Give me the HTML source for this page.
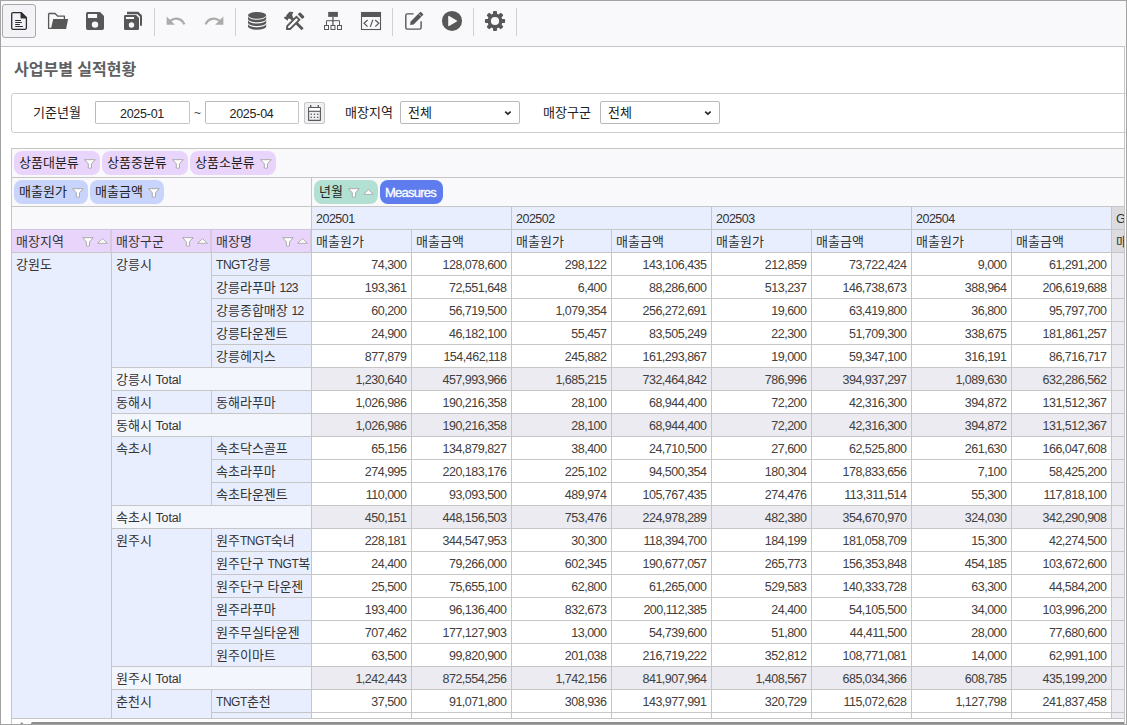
<!DOCTYPE html>
<html lang="ko"><head><meta charset="utf-8"><title>사업부별 실적현황</title>
<style>
*{box-sizing:border-box}
html,body{margin:0;padding:0}
html{overflow:hidden}
body{width:1127px;height:725px;overflow:hidden;background:#fff;position:relative;
 font-family:"Liberation Sans","Noto Sans CJK KR",sans-serif;font-size:13px;color:#222}
#app{position:absolute;left:0;top:0;width:1127px;height:725px;overflow:hidden;background:#fff}
#frame{position:absolute;left:0;top:0;width:1127px;height:725px;border:1px solid #a3a3a3;z-index:50;pointer-events:none}
#tb{position:absolute;left:0;top:0;width:1127px;height:47px;background:#f9f9fb}
.sep{position:absolute;top:8px;width:1px;height:28px;background:#d0d0d4}
#sel{position:absolute;left:2px;top:4px;width:34px;height:34px;border:1px solid #a9a9a9;border-radius:3px;background:#f2f2f7}
#panel{position:absolute;left:1px;top:46px;width:1124px;height:680px;border:1px solid #c6c6c6;border-left:0;background:#fff}
#title{position:absolute;left:14px;top:59px;font-weight:bold;font-size:16px;color:#5f5f5f;line-height:22px;white-space:nowrap}
#filt{position:absolute;left:11px;top:93px;width:1130px;height:40px;border:1px solid #cdcdcd;border-radius:3px}
.lbl{position:absolute;top:102px;line-height:22px;white-space:nowrap;color:#222}
.inp{position:absolute;top:101px;height:23px;border:1px solid #b9b9b9;border-radius:2px;background:#fff;line-height:21px;white-space:nowrap;color:#222}
.inp .n{color:#222;letter-spacing:-0.25px}
.inp.c{text-align:center}
.inp.s{padding-left:7px}
.chev{position:absolute;right:7px;top:7px;width:9px;height:7px}
#cal{position:absolute;left:304px;top:102px;width:21px;height:22px;border:1px solid #c6c6ca;border-radius:2px;background:#f0f0f2}
#grid{position:absolute;left:11px;top:148px;width:1113px;height:571px;overflow:hidden;border-top:1px solid #c6c6c6;border-left:1px solid #c6c6c6;border-bottom:1px solid #c6c6c6;background:#fff}
#grid div{position:absolute;white-space:nowrap;overflow:hidden}
.area{background:#f9f9fb;border-bottom:1px solid #c6c6c6;border-right:1px solid #c6c6c6}
.chip{height:24px;border-radius:8px;line-height:23px;padding-left:5px;color:#222}
.chip svg{position:absolute}
.chip .fn{top:8px}
.chip .st{top:9px}
.pu{background:#e9d4fc}
.bl{background:#c8d4fc}
.gr{background:#b2e1d3}
.me{background:#5e7cee;color:#fff !important}
.c{height:23px;line-height:22px;border-right:1px solid #c6c6c6;border-bottom:1px solid #c6c6c6;padding:1px 5px 0 4px;color:#333}
.l{font-size:12px;letter-spacing:-0.45px}
.l2{font-size:12.5px;letter-spacing:-0.15px}
.hm{font-size:12.5px;letter-spacing:-0.5px}
.ch{background:#e9eefe}
.rf{background:#e9d4fc;border-right-color:#d4c8de;box-shadow:inset -1px 0 0 #d6cadf}
.rf.last{border-right-color:#c6c6c6}
.rf svg{position:absolute}
.rf .fn{top:7px;left:70px}
.rf .st{top:8px;left:85px}
.rh{background:#e9eefe}
.rt{background:#f4f6fe}
.v,.vt,.n{font-size:12.5px;letter-spacing:-0.5px;color:#404040}
.v{text-align:right;background:#fff;padding-right:4.5px}
.vt{text-align:right;background:#ebebf1;padding-right:4.5px}
.gt{background:#ebebf1}
.gh{background:#dcdce0}
</style></head><body>
<div id="app">
<div id="tb"></div>
<div id="sel"></div>
<svg id="icons" width="540" height="46" viewBox="0 0 540 46" style="position:absolute;left:0;top:0">
<!-- new document (active) -->
<g fill="none" stroke="#2e2e2e" stroke-width="1.3" stroke-linejoin="round">
<path d="M13.1 12.6h8.1l5.2 5.2v10.1a1.4 1.4 0 0 1-1.4 1.4H13.1a1.4 1.4 0 0 1-1.4-1.4V14a1.4 1.4 0 0 1 1.4-1.4z"/>
<path d="M21.2 12.6v5.2h5.2z" fill="#2e2e2e"/>
<path d="M15.2 20.5h5.8M15.2 22.5h6.6M15.2 24.5h4.7M15.2 26.5h7.7" stroke-width="1" stroke-linecap="butt"/>
</g>
<!-- folder open -->
<g fill="#575757">
<path d="M48.6 13.5h6.5l2.7 2.7h6.6v2.9" fill="none" stroke="#575757" stroke-width="1.3" stroke-linejoin="round"/>
<path d="M48.6 13.5v14.8h2.6" fill="none" stroke="#575757" stroke-width="1.3" stroke-linejoin="round"/>
<path d="M53.2 19.1h14.9l-2 9.9H50.9z"/>
</g>
<!-- save -->
<path fill="#575757" fill-rule="evenodd" d="M87.8 12h12.3l3.9 3.9v12.3a1.8 1.8 0 0 1-1.8 1.8H87.8a1.8 1.8 0 0 1-1.8-1.8V13.8A1.8 1.8 0 0 1 87.8 12zM87.9 13.9v4h9.2v-4zM95 21.4a3.2 3.2 0 1 0 0 6.4 3.2 3.2 0 0 0 0-6.4z"/>
<!-- save all -->
<path fill="#575757" fill-rule="evenodd" d="M125.2 15h10.9l2.9 2.9v10.9a1.2 1.2 0 0 1-1.2 1.2h-12.6a1.2 1.2 0 0 1-1.2-1.2V16.2a1.2 1.2 0 0 1 1.2-1.2zM125.9 17.1v1.9h8.1v-1.9zM131.5 22.3a2.7 2.7 0 1 0 0 5.4 2.7 2.7 0 0 0 0-5.4z"/>
<path fill="#575757" d="M127 11.800h11.300l3.700 3.700v10.200h-2v-8.900l-2.500-2.500H127z"/>
<!-- undo / redo (disabled) -->
<path fill="#ababab" transform="translate(164.8 10.1) scale(0.9167)" d="M12.5,8C9.85,8 7.45,9 5.6,10.6L2,7V16H11L7.38,12.38C8.77,11.22 10.54,10.5 12.5,10.5C16.04,10.5 19.05,12.81 20.1,16L22.47,15.22C21.08,11.03 17.15,8 12.5,8Z"/>
<path fill="#ababab" transform="translate(203.2 10.1) scale(0.9167)" d="M18.4,10.6C16.55,9 14.15,8 11.5,8C6.85,8 2.92,11.03 1.54,15.22L3.9,16C4.95,12.81 7.95,10.5 11.5,10.5C13.45,10.5 15.23,11.22 16.62,12.38L13,16H22V7L18.4,10.6Z"/>
<!-- database -->
<g fill="#575757">
<ellipse cx="257.100" cy="15.300" rx="9.100" ry="3.400"/>
<path d="M248 16.300a9.100 3.400 0 0 0 18.200 0v2.600a9.100 3.400 0 0 1-18.200 0z"/>
<path d="M248 20.100a9.100 3.400 0 0 0 18.200 0v2.600a9.100 3.400 0 0 1-18.200 0z"/>
<path d="M248 23.900a9.100 3.400 0 0 0 18.200 0v2.500a9.100 3.400 0 0 1-18.200 0z"/>
</g>
<!-- tools -->
<g fill="#575757">
<path d="M292.500 17.100l11.100 11.100-2 2-11.100-11.100z"/>
<path d="M289.500 11.700l3.800.4-1.100 2.700.7 2.700-1.400 2-2.500-1.100-.9.500-.4 1.900-3.800-2.900.5-.9 1.900-.4v-1.300z"/>
<path d="M287.200 29v-2.950l9.200-9.200 2.950 2.950-9.200 9.200z" fill="#fff" stroke="#575757" stroke-width="1.900" stroke-linejoin="miter"/>
<path d="M286.300 29.900v-3l3 3z"/>
<path d="M297.700 14.300l1.600-1.600q.7-.4 1.400.1l3.400 3.400q.4.600-.1 1.200l-1.800 1.500z"/>
</g>
<!-- sitemap -->
<g fill="none" stroke="#575757" stroke-width="1">
<rect x="328.2" y="11.9" width="9.7" height="5" fill="#575757" stroke="none"/>
<path d="M332.95 16.9v8.2" stroke-width="1.3"/>
<path d="M326.5 25.1v-4.400h13v4.400"/>
<rect x="324.500" y="25.5" width="4" height="4"/>
<rect x="330.95" y="25.5" width="4" height="4"/>
<rect x="337.500" y="25.5" width="4" height="4"/>
</g>
<!-- code window -->
<g fill="none" stroke="#575757" stroke-width="1.1">
<rect x="361.500" y="12.5" width="19" height="17"/>
<rect x="361" y="12" width="20" height="5" fill="#575757" stroke="none"/>
<path d="M367.600 20l-3.600 3.300 3.600 3.300M370.300 26.900l2.600-7.300M375.200 20l3.600 3.300-3.600 3.300" stroke-width="1.2"/>
</g>
<!-- edit -->
<g fill="#575757">
<path d="M413.600 13.900h-6.300a1.500 1.500 0 0 0-1.500 1.500v12.200a1.500 1.500 0 0 0 1.500 1.500h12.300a1.500 1.500 0 0 0 1.500-1.500v-6.400" fill="none" stroke="#575757" stroke-width="1.400"/>
<path d="M410.100 24.900l.5-3.500 9.500-9.500q.4-.3.800 0l2.200 2.200q.3.400 0 .8l-9.500 9.500z"/>
<path d="M418.400 13.600l2.900 2.900" fill="none" stroke="#e4e4e6" stroke-width="0.700"/>
</g>
<!-- play -->
<path fill="#575757" fill-rule="evenodd" d="M452 10.900a10.050 10.050 0 1 0 0 20.100 10.050 10.050 0 0 0 0-20.100zM448.200 16.600a.7.700 0 0 1 1-.6l7.600 4.400a.7.700 0 0 1 0 1.200l-7.600 4.400a.7.700 0 0 1-1-.6z"/>
<!-- gear -->
<g fill="#575757" transform="translate(495 21)">
<circle r="5.800" fill="none" stroke="#575757" stroke-width="3.400"/>
<g id="tooth"><rect x="-2" y="-10.100" width="4" height="4" rx="1"/></g>
<rect x="-2" y="-10.100" width="4" height="4" rx="1" transform="rotate(45)"/>
<rect x="-2" y="-10.100" width="4" height="4" rx="1" transform="rotate(90)"/>
<rect x="-2" y="-10.100" width="4" height="4" rx="1" transform="rotate(135)"/>
<rect x="-2" y="-10.100" width="4" height="4" rx="1" transform="rotate(180)"/>
<rect x="-2" y="-10.100" width="4" height="4" rx="1" transform="rotate(225)"/>
<rect x="-2" y="-10.100" width="4" height="4" rx="1" transform="rotate(270)"/>
<rect x="-2" y="-10.100" width="4" height="4" rx="1" transform="rotate(315)"/>
</g>
</svg>
<div class="sep" style="left:154px"></div>
<div class="sep" style="left:235px"></div>
<div class="sep" style="left:392px"></div>
<div class="sep" style="left:473px"></div>
<div class="sep" style="left:516px"></div>
<div id="panel"></div>
<div id="title">사업부별 실적현황</div>
<div id="filt"></div>
<div class="lbl" style="left:33px">기준년월</div>
<div class="inp c" style="left:95px;width:95px"><span class="n">2025-01</span></div>
<div class="lbl" style="left:194px;color:#444;font-size:12px">~</div>
<div class="inp c" style="left:205px;width:94px"><span class="n">2025-04</span></div>
<div id="cal"><svg viewBox="305 103 19 20" width="19" height="20" style="position:absolute;left:0;top:0"><g fill="none" stroke="#595959" stroke-width="1.1"><rect x="308.600" y="107.500" width="11.800" height="12.900" rx="0.200"/><rect x="309.100" y="108" width="10.800" height="2.800" fill="#fff" stroke="none"/><path d="M308.600 111.300h11.800"/><path d="M310.700 105.100v2.400M318.300 105.100v2.400" stroke-width="1.300"/></g><g fill="#595959"><rect x="310.600" y="113.600" width="1.300" height="1.300"/><rect x="313.850" y="113.600" width="1.300" height="1.300"/><rect x="317.100" y="113.600" width="1.300" height="1.300"/><rect x="310.600" y="116.700" width="1.300" height="1.300"/><rect x="313.850" y="116.700" width="1.300" height="1.300"/><rect x="317.100" y="116.700" width="1.300" height="1.300"/></g></svg>
</div>
<div class="lbl" style="left:345px">매장지역</div>
<div class="inp s" style="left:400px;width:120px">전체<svg class="chev" viewBox="0 0 9 7"><path d="M2.200 2.600L4.900 5.200L7.600 2.600" fill="none" stroke="#222" stroke-width="1.600"/></svg></div>
<div class="lbl" style="left:543px">매장구군</div>
<div class="inp s" style="left:600px;width:120px">전체<svg class="chev" viewBox="0 0 9 7"><path d="M2.200 2.600L4.900 5.200L7.600 2.600" fill="none" stroke="#222" stroke-width="1.600"/></svg></div>
<div id="grid">
<div class="area" style="left:0;top:0;width:1200px;height:29px"></div>
<div class="chip pu" style="left:2px;top:2px;width:86px">상품대분류<svg style="left:70px" class="fn" viewBox="0 0 12 11" width="12" height="11"><path d="M0.600 0.700H11.200L7.500 4.800V8.900Q5.900 9.700 4.300 8.900V4.800z" fill="#fff" stroke="#a9a9a9" stroke-width="1" stroke-linejoin="round"/></svg></div>
<div class="chip pu" style="left:90px;top:2px;width:86px">상품중분류<svg style="left:70px" class="fn" viewBox="0 0 12 11" width="12" height="11"><path d="M0.600 0.700H11.200L7.500 4.800V8.900Q5.900 9.700 4.300 8.900V4.800z" fill="#fff" stroke="#a9a9a9" stroke-width="1" stroke-linejoin="round"/></svg></div>
<div class="chip pu" style="left:178px;top:2px;width:86px">상품소분류<svg style="left:70px" class="fn" viewBox="0 0 12 11" width="12" height="11"><path d="M0.600 0.700H11.200L7.500 4.800V8.900Q5.900 9.700 4.300 8.900V4.800z" fill="#fff" stroke="#a9a9a9" stroke-width="1" stroke-linejoin="round"/></svg></div>
<div class="area" style="left:0;top:29px;width:300px;height:29px"></div>
<div class="area" style="left:300px;top:29px;width:900px;height:29px"></div>
<div class="chip bl" style="left:2px;top:31px;width:74px">매출원가<svg style="left:58px" class="fn" viewBox="0 0 12 11" width="12" height="11"><path d="M0.600 0.700H11.200L7.500 4.800V8.900Q5.900 9.700 4.300 8.900V4.800z" fill="#fff" stroke="#a9a9a9" stroke-width="1" stroke-linejoin="round"/></svg></div>
<div class="chip bl" style="left:78px;top:31px;width:74px">매출금액<svg style="left:58px" class="fn" viewBox="0 0 12 11" width="12" height="11"><path d="M0.600 0.700H11.200L7.500 4.800V8.900Q5.900 9.700 4.300 8.900V4.800z" fill="#fff" stroke="#a9a9a9" stroke-width="1" stroke-linejoin="round"/></svg></div>
<div class="chip gr" style="left:302px;top:31px;width:64px">년월<svg style="left:34px" class="fn" viewBox="0 0 12 11" width="12" height="11"><path d="M0.600 0.700H11.200L7.500 4.800V8.900Q5.900 9.700 4.300 8.900V4.800z" fill="#fff" stroke="#a9a9a9" stroke-width="1" stroke-linejoin="round"/></svg><svg style="left:49px" class="st" viewBox="0 0 11 6" width="11" height="6"><path d="M0.600 5.300L5.500 0.700L10.400 5.300z" fill="#fff" stroke="#adadad" stroke-width="1" stroke-linejoin="round"/></svg></div>
<div class="chip me" style="left:368px;top:31px;width:63px"><span style="letter-spacing:-0.75px;position:relative;top:1px;-webkit-text-stroke:0.3px #fff">Measures</span></div>
<div class="c" style="left:0;top:58px;width:300px;background:#f9f9fb;border-bottom-color:#d3c5dd"></div>
<div class="c ch" style="left:300px;top:58px;width:200px"><span class="hm">202501</span></div>
<div class="c ch" style="left:500px;top:58px;width:200px"><span class="hm">202502</span></div>
<div class="c ch" style="left:700px;top:58px;width:200px"><span class="hm">202503</span></div>
<div class="c ch" style="left:900px;top:58px;width:200px"><span class="hm">202504</span></div>
<div class="c gh" style="left:1100px;top:58px;width:200px"><span class="l2">Grand Total</span></div>
<div class="c rf" style="left:0px;top:81px;width:100px">매장지역<svg class="fn" viewBox="0 0 12 11" width="12" height="11"><path d="M0.600 0.700H11.200L7.500 4.800V8.900Q5.900 9.700 4.300 8.900V4.800z" fill="#fff" stroke="#a9a9a9" stroke-width="1" stroke-linejoin="round"/></svg><svg class="st" viewBox="0 0 11 6" width="11" height="6"><path d="M0.600 5.300L5.500 0.700L10.400 5.300z" fill="#fff" stroke="#adadad" stroke-width="1" stroke-linejoin="round"/></svg></div>
<div class="c rf" style="left:100px;top:81px;width:100px">매장구군<svg class="fn" viewBox="0 0 12 11" width="12" height="11"><path d="M0.600 0.700H11.200L7.500 4.800V8.900Q5.900 9.700 4.300 8.900V4.800z" fill="#fff" stroke="#a9a9a9" stroke-width="1" stroke-linejoin="round"/></svg><svg class="st" viewBox="0 0 11 6" width="11" height="6"><path d="M0.600 5.300L5.500 0.700L10.400 5.300z" fill="#fff" stroke="#adadad" stroke-width="1" stroke-linejoin="round"/></svg></div>
<div class="c rf last" style="left:200px;top:81px;width:100px">매장명<svg class="fn" viewBox="0 0 12 11" width="12" height="11"><path d="M0.600 0.700H11.200L7.500 4.800V8.900Q5.900 9.700 4.300 8.900V4.800z" fill="#fff" stroke="#a9a9a9" stroke-width="1" stroke-linejoin="round"/></svg><svg class="st" viewBox="0 0 11 6" width="11" height="6"><path d="M0.600 5.300L5.500 0.700L10.400 5.300z" fill="#fff" stroke="#adadad" stroke-width="1" stroke-linejoin="round"/></svg></div>
<div class="c ch" style="left:300px;top:81px;width:100px">매출원가</div>
<div class="c ch" style="left:400px;top:81px;width:100px">매출금액</div>
<div class="c ch" style="left:500px;top:81px;width:100px">매출원가</div>
<div class="c ch" style="left:600px;top:81px;width:100px">매출금액</div>
<div class="c ch" style="left:700px;top:81px;width:100px">매출원가</div>
<div class="c ch" style="left:800px;top:81px;width:100px">매출금액</div>
<div class="c ch" style="left:900px;top:81px;width:100px">매출원가</div>
<div class="c ch" style="left:1000px;top:81px;width:100px">매출금액</div>
<div class="c gh" style="left:1100px;top:81px;width:100px">매출원가</div>
<div class="c rh" style="left:0;top:104px;width:100px;height:600px">강원도</div>
<div class="c rh" style="left:100px;top:104px;width:100px;height:115px">강릉시</div>
<div class="c rh" style="left:100px;top:242px;width:100px;height:23px">동해시</div>
<div class="c rh" style="left:100px;top:288px;width:100px;height:69px">속초시</div>
<div class="c rh" style="left:100px;top:380px;width:100px;height:138px">원주시</div>
<div class="c rh" style="left:100px;top:541px;width:100px;height:46px">춘천시</div>
<div class="c rh" style="left:200px;top:104px;width:100px"><span class="l">TNGT</span>강릉</div>
<div class="c v" style="left:300px;top:104px;width:100px">74,300</div>
<div class="c v" style="left:400px;top:104px;width:100px">128,078,600</div>
<div class="c v" style="left:500px;top:104px;width:100px">298,122</div>
<div class="c v" style="left:600px;top:104px;width:100px">143,106,435</div>
<div class="c v" style="left:700px;top:104px;width:100px">212,859</div>
<div class="c v" style="left:800px;top:104px;width:100px">73,722,424</div>
<div class="c v" style="left:900px;top:104px;width:100px">9,000</div>
<div class="c v" style="left:1000px;top:104px;width:100px">61,291,200</div>
<div class="c gt" style="left:1100px;top:104px;width:100px"></div>
<div class="c rh" style="left:200px;top:127px;width:100px">강릉라푸마 <span class="l">123</span></div>
<div class="c v" style="left:300px;top:127px;width:100px">193,361</div>
<div class="c v" style="left:400px;top:127px;width:100px">72,551,648</div>
<div class="c v" style="left:500px;top:127px;width:100px">6,400</div>
<div class="c v" style="left:600px;top:127px;width:100px">88,286,600</div>
<div class="c v" style="left:700px;top:127px;width:100px">513,237</div>
<div class="c v" style="left:800px;top:127px;width:100px">146,738,673</div>
<div class="c v" style="left:900px;top:127px;width:100px">388,964</div>
<div class="c v" style="left:1000px;top:127px;width:100px">206,619,688</div>
<div class="c gt" style="left:1100px;top:127px;width:100px"></div>
<div class="c rh" style="left:200px;top:150px;width:100px">강릉종합매장 <span class="l">12</span></div>
<div class="c v" style="left:300px;top:150px;width:100px">60,200</div>
<div class="c v" style="left:400px;top:150px;width:100px">56,719,500</div>
<div class="c v" style="left:500px;top:150px;width:100px">1,079,354</div>
<div class="c v" style="left:600px;top:150px;width:100px">256,272,691</div>
<div class="c v" style="left:700px;top:150px;width:100px">19,600</div>
<div class="c v" style="left:800px;top:150px;width:100px">63,419,800</div>
<div class="c v" style="left:900px;top:150px;width:100px">36,800</div>
<div class="c v" style="left:1000px;top:150px;width:100px">95,797,700</div>
<div class="c gt" style="left:1100px;top:150px;width:100px"></div>
<div class="c rh" style="left:200px;top:173px;width:100px">강릉타운젠트</div>
<div class="c v" style="left:300px;top:173px;width:100px">24,900</div>
<div class="c v" style="left:400px;top:173px;width:100px">46,182,100</div>
<div class="c v" style="left:500px;top:173px;width:100px">55,457</div>
<div class="c v" style="left:600px;top:173px;width:100px">83,505,249</div>
<div class="c v" style="left:700px;top:173px;width:100px">22,300</div>
<div class="c v" style="left:800px;top:173px;width:100px">51,709,300</div>
<div class="c v" style="left:900px;top:173px;width:100px">338,675</div>
<div class="c v" style="left:1000px;top:173px;width:100px">181,861,257</div>
<div class="c gt" style="left:1100px;top:173px;width:100px"></div>
<div class="c rh" style="left:200px;top:196px;width:100px">강릉헤지스</div>
<div class="c v" style="left:300px;top:196px;width:100px">877,879</div>
<div class="c v" style="left:400px;top:196px;width:100px">154,462,118</div>
<div class="c v" style="left:500px;top:196px;width:100px">245,882</div>
<div class="c v" style="left:600px;top:196px;width:100px">161,293,867</div>
<div class="c v" style="left:700px;top:196px;width:100px">19,000</div>
<div class="c v" style="left:800px;top:196px;width:100px">59,347,100</div>
<div class="c v" style="left:900px;top:196px;width:100px">316,191</div>
<div class="c v" style="left:1000px;top:196px;width:100px">86,716,717</div>
<div class="c gt" style="left:1100px;top:196px;width:100px"></div>
<div class="c rt" style="left:100px;top:219px;width:200px">강릉시 <span class="l2">Total</span></div>
<div class="c vt" style="left:300px;top:219px;width:100px">1,230,640</div>
<div class="c vt" style="left:400px;top:219px;width:100px">457,993,966</div>
<div class="c vt" style="left:500px;top:219px;width:100px">1,685,215</div>
<div class="c vt" style="left:600px;top:219px;width:100px">732,464,842</div>
<div class="c vt" style="left:700px;top:219px;width:100px">786,996</div>
<div class="c vt" style="left:800px;top:219px;width:100px">394,937,297</div>
<div class="c vt" style="left:900px;top:219px;width:100px">1,089,630</div>
<div class="c vt" style="left:1000px;top:219px;width:100px">632,286,562</div>
<div class="c gt" style="left:1100px;top:219px;width:100px"></div>
<div class="c rh" style="left:200px;top:242px;width:100px">동해라푸마</div>
<div class="c v" style="left:300px;top:242px;width:100px">1,026,986</div>
<div class="c v" style="left:400px;top:242px;width:100px">190,216,358</div>
<div class="c v" style="left:500px;top:242px;width:100px">28,100</div>
<div class="c v" style="left:600px;top:242px;width:100px">68,944,400</div>
<div class="c v" style="left:700px;top:242px;width:100px">72,200</div>
<div class="c v" style="left:800px;top:242px;width:100px">42,316,300</div>
<div class="c v" style="left:900px;top:242px;width:100px">394,872</div>
<div class="c v" style="left:1000px;top:242px;width:100px">131,512,367</div>
<div class="c gt" style="left:1100px;top:242px;width:100px"></div>
<div class="c rt" style="left:100px;top:265px;width:200px">동해시 <span class="l2">Total</span></div>
<div class="c vt" style="left:300px;top:265px;width:100px">1,026,986</div>
<div class="c vt" style="left:400px;top:265px;width:100px">190,216,358</div>
<div class="c vt" style="left:500px;top:265px;width:100px">28,100</div>
<div class="c vt" style="left:600px;top:265px;width:100px">68,944,400</div>
<div class="c vt" style="left:700px;top:265px;width:100px">72,200</div>
<div class="c vt" style="left:800px;top:265px;width:100px">42,316,300</div>
<div class="c vt" style="left:900px;top:265px;width:100px">394,872</div>
<div class="c vt" style="left:1000px;top:265px;width:100px">131,512,367</div>
<div class="c gt" style="left:1100px;top:265px;width:100px"></div>
<div class="c rh" style="left:200px;top:288px;width:100px">속초닥스골프</div>
<div class="c v" style="left:300px;top:288px;width:100px">65,156</div>
<div class="c v" style="left:400px;top:288px;width:100px">134,879,827</div>
<div class="c v" style="left:500px;top:288px;width:100px">38,400</div>
<div class="c v" style="left:600px;top:288px;width:100px">24,710,500</div>
<div class="c v" style="left:700px;top:288px;width:100px">27,600</div>
<div class="c v" style="left:800px;top:288px;width:100px">62,525,800</div>
<div class="c v" style="left:900px;top:288px;width:100px">261,630</div>
<div class="c v" style="left:1000px;top:288px;width:100px">166,047,608</div>
<div class="c gt" style="left:1100px;top:288px;width:100px"></div>
<div class="c rh" style="left:200px;top:311px;width:100px">속초라푸마</div>
<div class="c v" style="left:300px;top:311px;width:100px">274,995</div>
<div class="c v" style="left:400px;top:311px;width:100px">220,183,176</div>
<div class="c v" style="left:500px;top:311px;width:100px">225,102</div>
<div class="c v" style="left:600px;top:311px;width:100px">94,500,354</div>
<div class="c v" style="left:700px;top:311px;width:100px">180,304</div>
<div class="c v" style="left:800px;top:311px;width:100px">178,833,656</div>
<div class="c v" style="left:900px;top:311px;width:100px">7,100</div>
<div class="c v" style="left:1000px;top:311px;width:100px">58,425,200</div>
<div class="c gt" style="left:1100px;top:311px;width:100px"></div>
<div class="c rh" style="left:200px;top:334px;width:100px">속초타운젠트</div>
<div class="c v" style="left:300px;top:334px;width:100px">110,000</div>
<div class="c v" style="left:400px;top:334px;width:100px">93,093,500</div>
<div class="c v" style="left:500px;top:334px;width:100px">489,974</div>
<div class="c v" style="left:600px;top:334px;width:100px">105,767,435</div>
<div class="c v" style="left:700px;top:334px;width:100px">274,476</div>
<div class="c v" style="left:800px;top:334px;width:100px">113,311,514</div>
<div class="c v" style="left:900px;top:334px;width:100px">55,300</div>
<div class="c v" style="left:1000px;top:334px;width:100px">117,818,100</div>
<div class="c gt" style="left:1100px;top:334px;width:100px"></div>
<div class="c rt" style="left:100px;top:357px;width:200px">속초시 <span class="l2">Total</span></div>
<div class="c vt" style="left:300px;top:357px;width:100px">450,151</div>
<div class="c vt" style="left:400px;top:357px;width:100px">448,156,503</div>
<div class="c vt" style="left:500px;top:357px;width:100px">753,476</div>
<div class="c vt" style="left:600px;top:357px;width:100px">224,978,289</div>
<div class="c vt" style="left:700px;top:357px;width:100px">482,380</div>
<div class="c vt" style="left:800px;top:357px;width:100px">354,670,970</div>
<div class="c vt" style="left:900px;top:357px;width:100px">324,030</div>
<div class="c vt" style="left:1000px;top:357px;width:100px">342,290,908</div>
<div class="c gt" style="left:1100px;top:357px;width:100px"></div>
<div class="c rh" style="left:200px;top:380px;width:100px">원주<span class="l">TNGT</span>숙녀</div>
<div class="c v" style="left:300px;top:380px;width:100px">228,181</div>
<div class="c v" style="left:400px;top:380px;width:100px">344,547,953</div>
<div class="c v" style="left:500px;top:380px;width:100px">30,300</div>
<div class="c v" style="left:600px;top:380px;width:100px">118,394,700</div>
<div class="c v" style="left:700px;top:380px;width:100px">184,199</div>
<div class="c v" style="left:800px;top:380px;width:100px">181,058,709</div>
<div class="c v" style="left:900px;top:380px;width:100px">15,300</div>
<div class="c v" style="left:1000px;top:380px;width:100px">42,274,500</div>
<div class="c gt" style="left:1100px;top:380px;width:100px"></div>
<div class="c rh" style="left:200px;top:403px;width:100px">원주단구 <span class="l">TNGT</span>복</div>
<div class="c v" style="left:300px;top:403px;width:100px">24,400</div>
<div class="c v" style="left:400px;top:403px;width:100px">79,266,000</div>
<div class="c v" style="left:500px;top:403px;width:100px">602,345</div>
<div class="c v" style="left:600px;top:403px;width:100px">190,677,057</div>
<div class="c v" style="left:700px;top:403px;width:100px">265,773</div>
<div class="c v" style="left:800px;top:403px;width:100px">156,353,848</div>
<div class="c v" style="left:900px;top:403px;width:100px">454,185</div>
<div class="c v" style="left:1000px;top:403px;width:100px">103,672,600</div>
<div class="c gt" style="left:1100px;top:403px;width:100px"></div>
<div class="c rh" style="left:200px;top:426px;width:100px">원주단구 타운젠</div>
<div class="c v" style="left:300px;top:426px;width:100px">25,500</div>
<div class="c v" style="left:400px;top:426px;width:100px">75,655,100</div>
<div class="c v" style="left:500px;top:426px;width:100px">62,800</div>
<div class="c v" style="left:600px;top:426px;width:100px">61,265,000</div>
<div class="c v" style="left:700px;top:426px;width:100px">529,583</div>
<div class="c v" style="left:800px;top:426px;width:100px">140,333,728</div>
<div class="c v" style="left:900px;top:426px;width:100px">63,300</div>
<div class="c v" style="left:1000px;top:426px;width:100px">44,584,200</div>
<div class="c gt" style="left:1100px;top:426px;width:100px"></div>
<div class="c rh" style="left:200px;top:449px;width:100px">원주라푸마</div>
<div class="c v" style="left:300px;top:449px;width:100px">193,400</div>
<div class="c v" style="left:400px;top:449px;width:100px">96,136,400</div>
<div class="c v" style="left:500px;top:449px;width:100px">832,673</div>
<div class="c v" style="left:600px;top:449px;width:100px">200,112,385</div>
<div class="c v" style="left:700px;top:449px;width:100px">24,400</div>
<div class="c v" style="left:800px;top:449px;width:100px">54,105,500</div>
<div class="c v" style="left:900px;top:449px;width:100px">34,000</div>
<div class="c v" style="left:1000px;top:449px;width:100px">103,996,200</div>
<div class="c gt" style="left:1100px;top:449px;width:100px"></div>
<div class="c rh" style="left:200px;top:472px;width:100px">원주무실타운젠</div>
<div class="c v" style="left:300px;top:472px;width:100px">707,462</div>
<div class="c v" style="left:400px;top:472px;width:100px">177,127,903</div>
<div class="c v" style="left:500px;top:472px;width:100px">13,000</div>
<div class="c v" style="left:600px;top:472px;width:100px">54,739,600</div>
<div class="c v" style="left:700px;top:472px;width:100px">51,800</div>
<div class="c v" style="left:800px;top:472px;width:100px">44,411,500</div>
<div class="c v" style="left:900px;top:472px;width:100px">28,000</div>
<div class="c v" style="left:1000px;top:472px;width:100px">77,680,600</div>
<div class="c gt" style="left:1100px;top:472px;width:100px"></div>
<div class="c rh" style="left:200px;top:495px;width:100px">원주이마트</div>
<div class="c v" style="left:300px;top:495px;width:100px">63,500</div>
<div class="c v" style="left:400px;top:495px;width:100px">99,820,900</div>
<div class="c v" style="left:500px;top:495px;width:100px">201,038</div>
<div class="c v" style="left:600px;top:495px;width:100px">216,719,222</div>
<div class="c v" style="left:700px;top:495px;width:100px">352,812</div>
<div class="c v" style="left:800px;top:495px;width:100px">108,771,081</div>
<div class="c v" style="left:900px;top:495px;width:100px">14,000</div>
<div class="c v" style="left:1000px;top:495px;width:100px">62,991,100</div>
<div class="c gt" style="left:1100px;top:495px;width:100px"></div>
<div class="c rt" style="left:100px;top:518px;width:200px">원주시 <span class="l2">Total</span></div>
<div class="c vt" style="left:300px;top:518px;width:100px">1,242,443</div>
<div class="c vt" style="left:400px;top:518px;width:100px">872,554,256</div>
<div class="c vt" style="left:500px;top:518px;width:100px">1,742,156</div>
<div class="c vt" style="left:600px;top:518px;width:100px">841,907,964</div>
<div class="c vt" style="left:700px;top:518px;width:100px">1,408,567</div>
<div class="c vt" style="left:800px;top:518px;width:100px">685,034,366</div>
<div class="c vt" style="left:900px;top:518px;width:100px">608,785</div>
<div class="c vt" style="left:1000px;top:518px;width:100px">435,199,200</div>
<div class="c gt" style="left:1100px;top:518px;width:100px"></div>
<div class="c rh" style="left:200px;top:541px;width:100px"><span class="l">TNGT</span>춘천</div>
<div class="c v" style="left:300px;top:541px;width:100px">37,500</div>
<div class="c v" style="left:400px;top:541px;width:100px">91,071,800</div>
<div class="c v" style="left:500px;top:541px;width:100px">308,936</div>
<div class="c v" style="left:600px;top:541px;width:100px">143,977,991</div>
<div class="c v" style="left:700px;top:541px;width:100px">320,729</div>
<div class="c v" style="left:800px;top:541px;width:100px">115,072,628</div>
<div class="c v" style="left:900px;top:541px;width:100px">1,127,798</div>
<div class="c v" style="left:1000px;top:541px;width:100px">241,837,458</div>
<div class="c gt" style="left:1100px;top:541px;width:100px"></div>
<div class="c rh" style="left:200px;top:564px;width:100px"></div>
<div class="c v" style="left:300px;top:564px;width:100px"></div>
<div class="c v" style="left:400px;top:564px;width:100px"></div>
<div class="c v" style="left:500px;top:564px;width:100px"></div>
<div class="c v" style="left:600px;top:564px;width:100px"></div>
<div class="c v" style="left:700px;top:564px;width:100px"></div>
<div class="c v" style="left:800px;top:564px;width:100px"></div>
<div class="c v" style="left:900px;top:564px;width:100px"></div>
<div class="c v" style="left:1000px;top:564px;width:100px"></div>
<div class="c gt" style="left:1100px;top:564px;width:100px"></div>
</div>
<div id="sb" style="position:absolute;left:11px;top:719px;width:1113px;height:6px;background:#fdfdfd;border-left:1px solid #c6c6c6"></div>
<svg width="1127" height="6" viewBox="0 719 1127 6" style="position:absolute;left:0;top:719px"><path d="M19.500 725l2.300-3 2.300 3z" fill="#8c8c8c"/><path d="M31 725v-1.500a1.500 1.500 0 0 1 1.500-1.500h1091.500v3z" fill="#8e8e8e"/></svg>
<div id="frame"></div>
</div>
</body></html>
